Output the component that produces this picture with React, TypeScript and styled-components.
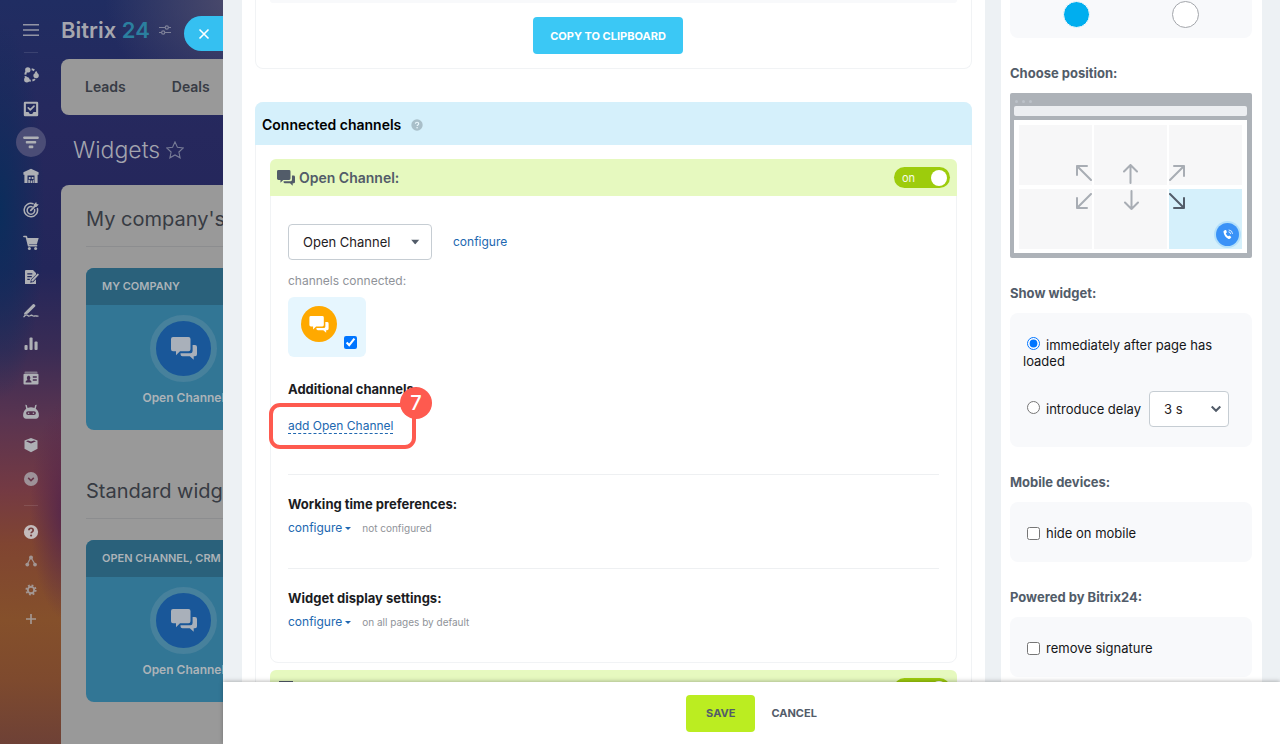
import React from "react";
import styled, { createGlobalStyle, css } from "styled-components";

const GlobalStyle = createGlobalStyle`
  *, *::before, *::after { box-sizing: border-box; }
  body { margin: 0; font-family: Inter, "Liberation Sans", sans-serif; font-size: 13px; line-height: 16px; color: #1b1c1f; }
  button, input, select { font: inherit; color: inherit; }
  h1, h2, h3, p, ul { margin: 0; padding: 0; }
  ul { list-style: none; }
  a { text-decoration: none; }
`;

/* ---------- shell ---------- */

const Shell = styled.div`
  display: grid;
  grid-template-columns: 223px minmax(0, 1fr);
  height: 100vh;
  overflow: hidden;
`;

const Backdrop = styled.div`
  position: relative;
  display: flex;
  min-height: 0;
  overflow: hidden;
  background:
    radial-gradient(ellipse 130px 110px at 235px 0, #4c4b6c 0%, #4c4b6c00 100%),
    radial-gradient(ellipse 45px 190px at 0 210px, #0b2d5c 0%, #0b2d5c00 100%),
    radial-gradient(ellipse 36px 110px at 66px 510px, #55264b 0%, #55264b00 100%),
    linear-gradient(180deg, #202d62 0, #26285d 130px, #23265a 270px, #3a2c55 350px, #5a3450 420px, #743a43 490px, #804531 545px, #85502b 620px, #7e4a2e 680px, #6e4136 744px);
`;

const Rail = styled.nav`
  display: flex;
  flex: none;
  flex-direction: column;
  align-items: center;
  width: 61px;
  padding-top: 22px;
  color: #aeb0b5;
`;

const IconButton = styled.button<{ $dim?: boolean; $active?: boolean }>`
  display: grid;
  place-items: center;
  width: 16px;
  height: 16px;
  padding: 0;
  border: 0;
  background: none;
  opacity: ${(p) => (p.$dim ? 0.75 : 1)};
  ${(p) =>
    p.$active &&
    css`
      width: 30px;
      height: 30px;
      margin: -7px 0;
      border-radius: 50%;
      background: #4b4d76;
    `}
`;

const RailDivider = styled.hr<{ $wide?: boolean }>`
  width: 14px;
  margin: ${(p) => (p.$wide ? 18 : 14)}px 0;
  border: 0;
  border-top: 1px solid #ffffff1c;
`;

const RailList = styled.ul<{ $tall?: boolean }>`
  display: flex;
  flex-direction: column;
  align-items: center;
  gap: 13px;
  ${(p) =>
    p.$tall &&
    css`
      height: 420px;
      justify-content: space-between;
      gap: 0;
    `}
`;

const RailItem = styled.li`
  display: flex;
`;

const Portal = styled.div`
  display: flex;
  flex: none;
  flex-direction: column;
  width: 400px;
`;

const PortalHead = styled.header`
  display: flex;
  flex: none;
  align-items: center;
  gap: 9px;
  height: 59px;
  color: #a5a6ae;
`;

const Brand = styled.span`
  font-size: 22px;
  font-weight: 600;
  line-height: 28px;
`;

const BrandNumber = styled.span`
  color: #2b7f9f;
`;

const PortalTabs = styled.nav`
  display: flex;
  flex: none;
  align-items: center;
  gap: 46px;
  height: 56px;
  padding: 0 24px;
  border-radius: 8px;
  background: #999;
`;

const PortalTab = styled.a`
  color: #383c45;
  font-size: 14px;
  font-weight: 600;
`;

const PortalTitle = styled.h1`
  display: flex;
  flex: none;
  align-items: center;
  gap: 6px;
  height: 70px;
  padding-left: 12px;
  color: #a3a4ae;
  font-size: 23px;
  font-weight: 300;
`;

const PortalBody = styled.section`
  display: flex;
  flex: 1;
  flex-direction: column;
  padding: 20px 25px;
  border-radius: 8px 0 0;
  background: #999;
`;

const WidgetGroup = styled.section`
  flex: none;
  height: 272px;
`;

const WidgetGroupTitle = styled.h2`
  padding-bottom: 13px;
  border-bottom: 1px solid #8c8d8f;
  color: #373b43;
  font-size: 20px;
  font-weight: 400;
  line-height: 28px;
  white-space: nowrap;
`;

const WidgetTile = styled.article`
  width: 195px;
  height: 162px;
  margin-top: 21px;
  overflow: hidden;
  border-radius: 8px;
  background: #327695;
  color: #acb3b8;
  font-size: 12px;
  font-weight: 600;
  text-align: center;
`;

const WidgetTileHead = styled.h3`
  padding: 0 16px;
  background: #2a617b;
  font-size: 11px;
  font-weight: 600;
  line-height: 37px;
  text-align: left;
  white-space: nowrap;
`;

const WidgetCircle = styled.div`
  display: grid;
  place-items: center;
  width: 67px;
  height: 67px;
  margin: 10px auto 8px;
  border: 6px solid #47819c;
  border-radius: 50%;
  background: #195799;
`;

const CloseTab = styled.button`
  position: absolute;
  top: 16px;
  right: 0;
  display: grid;
  place-items: center;
  width: 39px;
  height: 35px;
  padding: 0;
  border: 0;
  border-radius: 18px 0 0 18px;
  background: #35c0f1;
  color: #fff;
`;

/* ---------- slider panel ---------- */

const Panel = styled.div`
  display: flex;
  flex-direction: column;
  min-height: 0;
  background: #edf1f4;
`;

const PanelScroll = styled.div`
  display: grid;
  flex: 1;
  grid-template-columns: minmax(0, 1fr) 261px;
  gap: 16px;
  min-height: 0;
  padding: 0 18px 0 19px;
  overflow: hidden;
`;

const MainColumn = styled.main`
  padding: 0 13px;
  background: #fff;
`;

const Card = styled.section`
  border: 1px solid #f1f3f5;
  border-radius: 8px;
`;

const CodeCard = styled(Card)`
  margin-bottom: 33px;
  padding: 0 14px 14px;
  border-top: 0;
  border-radius: 0 0 8px 8px;
`;

const CodeArea = styled.div`
  height: 3px;
  border-radius: 0 0 4px 4px;
  background: #f8f9fb;
`;

const ActionRow = styled.div`
  display: flex;
  justify-content: center;
  padding: 14px 11px 0 0;
`;

const Button = styled.button<{ $kind: "primary" | "save" | "plain" }>`
  height: 37px;
  padding: 0 ${(p) => (p.$kind === "primary" ? 17 : p.$kind === "save" ? 20 : 0)}px;
  border: 0;
  border-radius: 4px;
  background: ${(p) => ({ primary: "#3bc8f5", save: "#bbed21", plain: "none" })[p.$kind]};
  color: ${(p) => (p.$kind === "primary" ? "#fff" : "#535c69")};
  font-size: 11px;
  font-weight: 700;
`;

const ChannelsHead = styled.h2`
  display: flex;
  align-items: center;
  gap: 10px;
  height: 43px;
  margin: -1px -1px 0;
  padding: 2px 7px 0;
  border-radius: 8px 8px 0 0;
  background: #d5f0fb;
  color: #000;
  font-size: 14px;
  font-weight: 600;
`;

const ChannelsBody = styled.div`
  display: flex;
  flex-direction: column;
  gap: 7px;
  padding: 14px;
`;

const ChannelHead = styled.header`
  display: flex;
  align-items: center;
  justify-content: space-between;
  height: 37px;
  margin: -1px -1px 0;
  padding: 0 7px;
  border-radius: 6px 6px 0 0;
  background: #e6f9bf;
`;

const ChannelTitle = styled.h3`
  display: flex;
  align-items: center;
  gap: 4px;
  color: #525c69;
  font-size: 14px;
  font-weight: 600;
`;

const Toggle = styled.label`
  display: flex;
  align-items: center;
  justify-content: space-between;
  width: 56px;
  height: 21px;
  padding: 0 3px 0 8px;
  border-radius: 11px;
  background: #9dcc0c;
  color: #f7fbe8;
  font-size: 11px;
`;

const ToggleKnob = styled.input`
  width: 16px;
  height: 16px;
  margin: 0;
  border-radius: 50%;
  background: #fff;
  appearance: none;
`;

const ChannelSection = styled.div<{ $first?: boolean }>`
  margin: 0 17px;
  padding: ${(p) => (p.$first ? "28px 0 40px" : "21px 0 32px")};
  border-top: ${(p) => (p.$first ? "0" : "1px solid #eef0f2")};
`;

const SelectRow = styled.div`
  display: flex;
  align-items: center;
  gap: 21px;
`;

const SelectBox = styled.span<{ $width: number }>`
  position: relative;
  display: inline-flex;
  width: ${(p) => p.$width}px;
  color: #525c69;

  svg {
    position: absolute;
    top: 50%;
    right: 8px;
    transform: translateY(-50%);
    pointer-events: none;
  }
`;

const Select = styled.select`
  width: 100%;
  height: 36px;
  padding: 0 14px;
  border: 1px solid #c6cdd3;
  border-radius: 4px;
  background: #fff;
  color: #1f2023;
  appearance: none;
`;

const Link = styled.a<{ $dashed?: boolean }>`
  color: #2067b0;
  font-size: 12px;
  border-bottom: ${(p) => (p.$dashed ? "1px dashed #2067b0" : "0")};
`;

const Muted = styled.p`
  margin: 13px 0 8px;
  color: #8f9399;
  font-size: 12px;
`;

const ConnectedTile = styled.label`
  display: flex;
  align-items: flex-end;
  gap: 7px;
  width: 78px;
  height: 60px;
  padding: 0 9px 8px 13px;
  border-radius: 6px;
  background: #e6f6fe;
`;

const OrangeCircle = styled.span`
  display: grid;
  align-self: flex-start;
  flex: none;
  place-items: center;
  width: 36px;
  height: 36px;
  margin-top: 9px;
  border-radius: 50%;
  background: #ffa900;
`;

const Check = styled.input`
  flex: none;
  width: 13px;
  height: 13px;
  margin: 0;
`;

const SubTitle = styled.h3`
  font-size: 13px;
  font-weight: 700;
`;

const AdditionalTitle = styled(SubTitle)`
  margin: 24px 0 21px;
`;

const Highlighted = styled.div`
  position: relative;
  display: flex;
  width: 104px;
  height: 16px;
  white-space: nowrap;
`;

const HighlightFrame = styled.span`
  position: absolute;
  top: -15px;
  left: -19px;
  width: 147px;
  height: 46px;
  border: 4px solid #fe5a4f;
  border-radius: 11px;
  pointer-events: none;
`;

const HighlightBadge = styled.span`
  position: absolute;
  top: -31px;
  left: 112px;
  width: 32px;
  height: 32px;
  border-radius: 50%;
  background: #fe5a4f;
  color: #fff;
  font-size: 20px;
  font-weight: 500;
  line-height: 32px;
  text-align: center;
`;

const SettingRow = styled.div`
  display: flex;
  align-items: center;
  gap: 11px;
  margin-top: 8px;
`;

const MenuButton = styled.button`
  display: flex;
  align-items: center;
  gap: 3px;
  padding: 0;
  border: 0;
  background: none;
  color: #2067b0;
  font-size: 12px;
`;

const Note = styled.span`
  color: #8f9399;
  font-size: 10px;
`;

/* ---------- right column ---------- */

const Aside = styled.aside`
  display: flex;
  flex-direction: column;
  padding: 0 10px 0 9px;
  background: #fff;
`;

const AsideBox = styled.div<{ $pad: string; $cut?: boolean }>`
  flex: none;
  padding: ${(p) => p.$pad};
  border-radius: ${(p) => (p.$cut ? "0 0 8px 8px" : "8px")};
  background: #f8f9fb;
  color: #151618;
`;

const ColorRow = styled.div`
  display: flex;
  justify-content: center;
  gap: 82px;
`;

const ColorRadio = styled.input<{ $fill: string; $line: string }>`
  width: 27px;
  height: 27px;
  margin: 0;
  border: 1px solid ${(p) => p.$line};
  border-radius: 50%;
  background: ${(p) => p.$fill};
  appearance: none;
`;

const AsideTitle = styled.h2`
  margin: 27px 0 12px;
  color: #525c69;
  font-size: 13px;
  font-weight: 700;
`;

const RadioText = styled.label`
  display: block;
`;

const Radio = styled.input`
  width: 13px;
  height: 13px;
  margin: 0 6px 0 4px;
`;

const DelayRow = styled.div`
  display: flex;
  align-items: center;
  gap: 8px;
  margin-top: 22px;
  white-space: nowrap;
`;

const CheckRow = styled.label`
  display: flex;
  align-items: center;
  gap: 6px;
  line-height: 20px;
`;

const Browser = styled.div`
  display: flex;
  flex-direction: column;
  gap: 4px;
  padding: 7px 5px 5px 4px;
  border-radius: 2px;
  background: #adb2b8;
`;

const BrowserDots = styled.div`
  display: flex;
  gap: 4px;
  height: 2px;
  padding-left: 1px;

  &::before, &::after, i { content: ""; width: 3px; height: 3px; border-radius: 50%; background: #bcc2c9; }
`;

const BrowserBar = styled.div`
  height: 10px;
  border-radius: 2px;
  background: #eceef1;
`;

const PositionGrid = styled.div`
  display: grid;
  grid-template-columns: repeat(3, 1fr);
  gap: 4px 2px;
  padding: 5px 5px 4px;
  background: #fff;
`;

const PositionCell = styled.button<{ $at: string; $selected?: boolean; $inset: number }>`
  position: relative;
  display: grid;
  place-items: ${(p) => p.$at};
  height: 60px;
  padding: ${(p) => p.$inset}px 0;
  border: 0;
  background: ${(p) => (p.$selected ? "#d5f0fb" : "#f7f7f8")};
  color: ${(p) => (p.$selected ? "#525c69" : "#a8adb4")};
`;

const WidgetPin = styled.span`
  position: absolute;
  right: 3px;
  bottom: 3px;
  display: grid;
  place-items: center;
  width: 23px;
  height: 23px;
  border-radius: 50%;
  background: #3a92f7;
  box-shadow: 0 0 0 2px #b4e0fa;
`;

const Footer = styled.footer`
  position: relative;
  display: flex;
  flex: none;
  align-items: center;
  justify-content: center;
  gap: 16px;
  height: 62px;
  background: #fff;
  box-shadow: 0 -1px 4px #00000042;
`;

/* ---------- icons ---------- */

type IconProps = { children: React.ReactNode; size?: number; box?: string };

const Icon = ({ children, size = 16, box = "0 0 16 16" }: IconProps) => (
  <svg width={size} height={size} viewBox={box} fill="currentColor" aria-hidden="true">
    {children}
  </svg>
);

const Bubbles = ({ width, height, color }: { width: number; height: number; color: string }) => (
  <svg width={width} height={height} viewBox="0 0 26 23" fill={color} aria-hidden="true">
    <path d="M2 0h15.500a2 2 0 0 1 2 2v10.300a2 2 0 0 1-2 2H9l-4 4v-4H2a2 2 0 0 1-2-2V2a2 2 0 0 1 2-2z" />
    <path d="M21.600 8H24a2 2 0 0 1 2 2v7.200a2 2 0 0 1-2 2h-1.300v3.600l-3.900-3.600h-7.300a2 2 0 0 1-2-2v-.9h9.900a2.200 2.200 0 0 0 2.200-2.200z" />
  </svg>
);

const stroke = (width: number) => ({
  fill: "none",
  stroke: "currentColor",
  strokeWidth: width,
  strokeLinecap: "round" as const,
  strokeLinejoin: "round" as const,
});

const railIcons: { name: string; art: React.ReactNode; active?: boolean; dim?: boolean }[] = [
  {
    name: "Feed",
    art: (
      <>
        <circle cx="8" cy="8" r="5.700" fill="none" stroke="currentColor" strokeWidth="2" strokeDasharray="2.800 1.677" />
        <circle cx="4.800" cy="2.900" r="2.700" />
        <circle cx="13.100" cy="8.600" r="2.700" />
        <circle cx="3.800" cy="12.800" r="2.700" />
      </>
    ),
  },
  {
    name: "Tasks",
    art: (
      <>
        <path fillRule="evenodd" d="M2 .8h12A1.200 1.200 0 0 1 15.200 2v12a1.200 1.200 0 0 1-1.200 1.200H2A1.200 1.200 0 0 1 .8 14V2A1.200 1.200 0 0 1 2 .8zm.9 2v8.200h2.600l1.300 2h2.400l1.300-2h2.600V2.800z" />
        <path d="M5.300 6.900l2 2 3.700-3.800" {...stroke(1.7)} />
      </>
    ),
  },
  {
    name: "CRM",
    active: true,
    art: (
      <>
        <rect x=".3" y="2.400" width="15.400" height="2.600" rx=".8" />
        <rect x="2.800" y="7" width="10.400" height="2.600" rx=".8" />
        <rect x="5.700" y="11.600" width="4.600" height="2.600" rx=".8" />
      </>
    ),
  },
  {
    name: "Inventory",
    art: (
      <path
        fillRule="evenodd"
        d="M8 .7l7.600 3.600v2.500h-1V15H11.500V7.600h-7V15H1.400V6.800h-1V4.300zM5.800 9h1.800v2H5.800zM8.700 9h1.800v2H8.700zM5.300 11.800h1.600V15H5.300zM7.600 12.600h1.700V15H7.600zM9.900 11.800h.9V15h-.9z"
      />
    ),
  },
  {
    name: "Marketing",
    art: (
      <>
        <path d="M10 1.700A6.700 6.700 0 1 0 14.400 6.500" {...stroke(1.5)} />
        <path d="M9 4.700a3.800 3.800 0 1 0 2.600 2.700" {...stroke(1.5)} />
        <path d="M7.800 8.400l4.400-4.600" {...stroke(1.8)} />
        <path d="M10.800 4.900V2.400L13.200.1l.5 2 2.100.5-2.400 2.400z" />
      </>
    ),
  },
  {
    name: "Sales",
    art: (
      <>
        <path d="M.9 1.500h2.400l2.300 9.300h8" {...stroke(1.6)} />
        <path d="M3.800 3h11.900l-1.900 6.600H5.300z" />
        <circle cx="6.400" cy="13.600" r="1.500" />
        <circle cx="12.600" cy="13.600" r="1.500" />
      </>
    ),
  },
  {
    name: "Documents",
    art: (
      <>
        <path
          fillRule="evenodd"
          d="M3 .9h7l3 3v1.500L8 10.600l-.8 3.200 3.200-.8 2.600-2.700V15H2V1.900a1 1 0 0 1 1-1zm1.300 3.300v1.300h5V4.200zm0 2.800v1.300h4.500V7zm0 2.800V11h2.500V9.800z"
        />
        <path d="M9.300 11.500l5.500-5.900" {...stroke(1.9)} />
      </>
    ),
  },
  {
    name: "Signature",
    art: (
      <>
        <path d="M1.200 9.900L9.900 1.200q.7-.6 1.400 0l.8.900q.7.700 0 1.400L5 10.500l-3.900 1.300z" />
        <path d="M1 13.700c2.200-3 3-1.700 4.300-.8 1.300.9 2-.9 3.300-.6 1.300.3 1.300 1.200 2.900.7 1-.4 2 .2 3.500.1" {...stroke(1.4)} />
      </>
    ),
  },
  {
    name: "Analytics",
    art: (
      <>
        <rect x="1.500" y="9" width="3.100" height="5" rx="1" />
        <rect x="6.500" y="1.500" width="3.100" height="12.500" rx="1" />
        <rect x="11.500" y="5.500" width="3.100" height="8.500" rx="1" />
      </>
    ),
  },
  {
    name: "Contacts",
    art: (
      <>
        <rect x="1.500" y="1.600" width="13" height="2" rx=".8" opacity=".55" />
        <path
          fillRule="evenodd"
          d="M1.500 3.800h13a1 1 0 0 1 1 1v8.700a1 1 0 0 1-1 1h-13a1 1 0 0 1-1-1V4.800a1 1 0 0 1 1-1zM2.600 12.500h5.900c0-1.800-1-2-2-2.400 1.400-1.600.8-4.300-.9-4.300s-2.300 2.700-.9 4.300c-1 .4-2.100.6-2.100 2.400zM9.800 6.300v1.400h4V6.300zm0 3v1.400h4V9.300z"
        />
      </>
    ),
  },
  {
    name: "Robots",
    art: (
      <path
        fillRule="evenodd"
        d="M2.300.8l1.400.2.900 3A8.500 8.500 0 0 1 8 3.200c1.200 0 2.300.3 3.400.8l.9-3 1.400-.2-.9 3.900c2 1.400 3.100 3.700 3.100 6.600 0 2-1.200 3.400-3 3.400H3.100c-1.800 0-3-1.400-3-3.400 0-2.900 1.200-5.200 3.100-6.600zM5 7.200a1.900 1.900 0 0 0 0 3.800h6a1.900 1.900 0 0 0 0-3.800zm.6 1.200a.8.800 0 1 1 0 1.600.8.800 0 0 1 0-1.600zm4.800 0a.8.800 0 1 1 0 1.600.8.800 0 0 1 0-1.600z"
      />
    ),
  },
  {
    name: "Market",
    art: (
      <>
        <path d="M8 1l6.500 2.600v8.200L8 15.200l-6.500-3.400V3.600z" />
        <path d="M3 4.300L8 6.500l5-2.200L11 3.400 8 4.600 5 3.400z" fill="#562f4d" />
      </>
    ),
  },
  {
    name: "More",
    dim: true,
    art: (
      <>
        <circle cx="8" cy="8" r="7" />
        <path d="M5.200 6.900L8 9.600l2.800-2.700" fill="none" stroke="#65344a" strokeWidth="1.500" />
      </>
    ),
  },
];

const toolIcons: { name: string; art: React.ReactNode; dim?: boolean }[] = [
  {
    name: "Help",
    art: (
      <>
        <circle cx="8" cy="8" r="7.100" fill="#c4bcbc" />
        <path d="M5.900 6.300c.1-2.800 4.300-2.600 4.300 0 0 1.500-2 1.500-2.100 3" fill="none" stroke="#763e3d" strokeWidth="1.700" />
        <circle cx="8.100" cy="11.500" r="1.100" fill="#763e3d" />
      </>
    ),
  },
  {
    name: "Sitemap",
    dim: true,
    art: (
      <>
        <path d="M4.500 10.800L7 6M8.900 6l2.800 4.800" {...stroke(1.2)} />
        <circle cx="8" cy="4.600" r="2" />
        <circle cx="4.300" cy="11.600" r="1.900" />
        <circle cx="12" cy="11.600" r="1.900" />
      </>
    ),
  },
  {
    name: "Settings",
    dim: true,
    art: (
      <>
        <circle cx="8" cy="8" r="3.200" fill="none" stroke="currentColor" strokeWidth="1.900" />
        <circle cx="8" cy="8" r="4.700" fill="none" stroke="currentColor" strokeWidth="1.800" strokeDasharray="1.850 1.841" />
      </>
    ),
  },
  { name: "Add", dim: true, art: <path d="M8 3v10M3 8h10" fill="none" stroke="currentColor" strokeWidth="1.700" /> },
];

const Caret = () => (
  <svg width="6" height="3" viewBox="0 0 6 3" fill="currentColor" aria-hidden="true">
    <path d="M0 0h6L3 3z" />
  </svg>
);

const positions = [
  { name: "Top left", at: "end end", d: "M15 15L1 1M1 10V1h10" },
  { name: "Top center", at: "end center", d: "M7.500 19V1M1 7.500L7.500 1 14 7.500", tall: true },
  { name: "Top right", at: "end start", d: "M1 15L15 1M5 1h10v10" },
  { name: "Bottom left", at: "start end", d: "M15 1L1 15M1 5v10h10" },
  { name: "Bottom center", at: "start center", d: "M8.500 1v18M2 12.500L8.500 19l6.500-6.500", tall: true },
  { name: "Bottom right", at: "start start", d: "M1 1l14 14M15 5v10H5", selected: true },
];

/* ---------- parts ---------- */

const CompanyWidgets = ({ title, label }: { title: string; label: string }) => (
  <WidgetGroup>
    <WidgetGroupTitle>{title}</WidgetGroupTitle>
    <WidgetTile>
      <WidgetTileHead>{label}</WidgetTileHead>
      <WidgetCircle>
        <Bubbles width={26} height={23} color="#a9b0ba" />
      </WidgetCircle>
      Open Channel
    </WidgetTile>
  </WidgetGroup>
);

const Setting = ({ title, note }: { title: string; note: string }) => (
  <ChannelSection>
    <SubTitle>{title}</SubTitle>
    <SettingRow>
      <MenuButton type="button">
        configure
        <Caret />
      </MenuButton>
      <Note>{note}</Note>
    </SettingRow>
  </ChannelSection>
);

const Switch = ({ name }: { name: string }) => (
  <Toggle>
    on
    <ToggleKnob type="checkbox" role="switch" aria-label={name} defaultChecked />
  </Toggle>
);

export default function App() {
  return (
    <>
      <GlobalStyle />
      <Shell>
        <Backdrop>
          <Rail aria-label="Sections">
            <IconButton type="button" aria-label="Menu">
              <Icon>
                <path d="M0 2.700h16M0 8h16M0 13.300h16" fill="none" stroke="#9395a5" strokeWidth="1.500" />
              </Icon>
            </IconButton>
            <RailDivider />
            <RailList $tall>
              {railIcons.map((item) => (
                <RailItem key={item.name}>
                  <IconButton type="button" aria-label={item.name} $active={item.active} $dim={item.dim}>
                    <Icon>{item.art}</Icon>
                  </IconButton>
                </RailItem>
              ))}
            </RailList>
            <RailDivider $wide />
            <RailList>
              {toolIcons.map((item) => (
                <RailItem key={item.name}>
                  <IconButton type="button" aria-label={item.name} $dim={item.dim}>
                    <Icon>{item.art}</Icon>
                  </IconButton>
                </RailItem>
              ))}
            </RailList>
          </Rail>

          <Portal>
            <PortalHead>
              <Brand>
                Bitrix <BrandNumber>24</BrandNumber>
              </Brand>
              <svg width="12" height="12" viewBox="0 0 12 12" fill="none" stroke="#7e8199" strokeWidth="1.200" aria-hidden="true">
                <path d="M0 3.500h6M9.500 3.500H12M0 8.500h2.500M6 8.500h6" />
                <circle cx="7.800" cy="3.500" r="1.600" />
                <circle cx="4.200" cy="8.500" r="1.600" />
              </svg>
            </PortalHead>
            <PortalTabs>
              <PortalTab href="#leads">Leads</PortalTab>
              <PortalTab href="#deals">Deals</PortalTab>
            </PortalTabs>
            <PortalTitle>
              Widgets
              <svg width="18" height="18" viewBox="0 0 18 18" fill="none" stroke="#777b96" strokeWidth="1.100" aria-hidden="true">
                <path d="M9 .9l2.400 5.400 5.900.7-4.400 4 1.200 5.800L9 13.900l-5.100 2.900 1.200-5.800-4.400-4 5.900-.7z" />
              </svg>
            </PortalTitle>
            <PortalBody>
              <CompanyWidgets title="My company's widgets" label="MY COMPANY" />
              <CompanyWidgets title="Standard widgets" label="OPEN CHANNEL, CRM FORM" />
            </PortalBody>
          </Portal>

          <CloseTab type="button" aria-label="Close">
            <svg width="12" height="12" viewBox="0 0 12 12" fill="none" stroke="currentColor" strokeWidth="1.600" aria-hidden="true">
              <path d="M1.500 1.500l9 9M10.500 1.500l-9 9" />
            </svg>
          </CloseTab>
        </Backdrop>

        <Panel>
          <PanelScroll>
            <MainColumn>
              <CodeCard>
                <CodeArea />
                <ActionRow>
                  <Button type="button" $kind="primary">
                    COPY TO CLIPBOARD
                  </Button>
                </ActionRow>
              </CodeCard>

              <Card>
                <ChannelsHead>
                  Connected channels
                  <Icon size={12} box="0 0 12 12">
                    <circle cx="6" cy="6" r="5.700" fill="#a9bfc9" />
                    <path d="M4.400 4.800c.1-2.100 3.300-2 3.300 0 0 1.100-1.500 1.100-1.600 2.200" fill="none" stroke="#eaf7fc" strokeWidth="1.200" />
                    <circle cx="6.100" cy="8.700" r=".8" fill="#eaf7fc" />
                  </Icon>
                </ChannelsHead>
                <ChannelsBody>
                  <Card>
                    <ChannelHead>
                      <ChannelTitle>
                        <Bubbles width={18} height={16} color="#525c69" />
                        Open Channel:
                      </ChannelTitle>
                      <Switch name="Open Channel" />
                    </ChannelHead>
                    <ChannelSection $first>
                      <SelectRow>
                        <SelectBox $width={144}>
                          <Select aria-label="Open Channel" defaultValue="main">
                            <option value="main">Open Channel</option>
                          </Select>
                          <svg width="16" height="5" viewBox="0 0 16 5" fill="currentColor" aria-hidden="true">
                            <path d="M3 0h8.400L7.200 5z" />
                          </svg>
                        </SelectBox>
                        <Link href="#configure">configure</Link>
                      </SelectRow>
                      <Muted>channels connected:</Muted>
                      <ConnectedTile>
                        <OrangeCircle>
                          <Bubbles width={20} height={17} color="#fff" />
                        </OrangeCircle>
                        <Check type="checkbox" aria-label="Live chat" defaultChecked />
                      </ConnectedTile>
                      <AdditionalTitle>Additional channels:</AdditionalTitle>
                      <Highlighted>
                        <Link href="#add" $dashed>
                          add Open Channel
                        </Link>
                        <HighlightFrame />
                        <HighlightBadge>7</HighlightBadge>
                      </Highlighted>
                    </ChannelSection>
                    <Setting title="Working time preferences:" note="not configured" />
                    <Setting title="Widget display settings:" note="on all pages by default" />
                  </Card>
                  <Card>
                    <ChannelHead>
                      <ChannelTitle>
                        <svg width="18" height="16" viewBox="0 0 18 16" fill="#525c69" aria-hidden="true">
                          <path fillRule="evenodd" d="M2 0h14v15H2zm2 3v10h10V3z" />
                        </svg>
                        CRM form:
                      </ChannelTitle>
                      <Switch name="CRM form" />
                    </ChannelHead>
                  </Card>
                </ChannelsBody>
              </Card>
            </MainColumn>

            <Aside>
              <AsideBox $pad="1px 0 10px" $cut>
                <ColorRow>
                  <ColorRadio type="radio" name="color" aria-label="Blue" $fill="#00aeef" $line="#f8f9fb" defaultChecked />
                  <ColorRadio type="radio" name="color" aria-label="White" $fill="#fff" $line="#a3a6ab" />
                </ColorRow>
              </AsideBox>

              <AsideTitle>Choose position:</AsideTitle>
              <Browser>
                <BrowserDots>
                  <i />
                </BrowserDots>
                <BrowserBar />
                <PositionGrid>
                  {positions.map((p) => (
                    <PositionCell
                      key={p.name}
                      type="button"
                      aria-label={p.name}
                      $at={p.at}
                      $inset={p.tall ? 1 : 4}
                      $selected={p.selected}
                    >
                      <svg width="16" height={p.tall ? 20 : 16} viewBox={p.tall ? "0 0 16 20" : "0 0 16 16"} aria-hidden="true">
                        <path d={p.d} {...stroke(2)} />
                      </svg>
                      {p.selected && (
                        <WidgetPin>
                          <svg width="12" height="12" viewBox="0 0 12 12" fill="#fff" aria-hidden="true">
                            <path d="M2.300 1.600l1.200-.5c.4-.1.700.1.800.4l.5 1.400c.1.300 0 .6-.3.800l-.7.500c.5 1.300 1.200 2.300 2.400 3.100l.7-.5c.3-.2.600-.2.900 0l1.200.9c.3.200.3.600.1.900l-.8 1c-.4.500-1.100.600-1.700.3C3.700 8.700 2 6.400 1.500 3c-.1-.6.200-1.100.8-1.400z" />
                            <path d="M6.500 2.800q2 .2 2.200 2.300M6.700.9q3.600.3 3.900 4" fill="none" stroke="#fff" strokeWidth=".8" />
                          </svg>
                        </WidgetPin>
                      )}
                    </PositionCell>
                  ))}
                </PositionGrid>
              </Browser>

              <AsideTitle>Show widget:</AsideTitle>
              <AsideBox $pad="24px 13px 20px">
                <RadioText>
                  <Radio type="radio" name="delay" defaultChecked />
                  immediately after page has loaded
                </RadioText>
                <DelayRow>
                  <RadioText>
                    <Radio type="radio" name="delay" />
                    introduce delay
                  </RadioText>
                  <SelectBox $width={80}>
                    <Select aria-label="Delay" defaultValue="3">
                      <option value="3">3 s</option>
                    </Select>
                    <svg width="10" height="7" viewBox="0 0 10 7" fill="none" stroke="currentColor" strokeWidth="2" aria-hidden="true">
                      <path d="M.7 1L5 5.300 9.300 1" />
                    </svg>
                  </SelectBox>
                </DelayRow>
              </AsideBox>

              <AsideTitle>Mobile devices:</AsideTitle>
              <AsideBox $pad="21px 17px 19px">
                <CheckRow>
                  <Check type="checkbox" />
                  hide on mobile
                </CheckRow>
              </AsideBox>

              <AsideTitle>Powered by Bitrix24:</AsideTitle>
              <AsideBox $pad="21px 17px 19px">
                <CheckRow>
                  <Check type="checkbox" />
                  remove signature
                </CheckRow>
              </AsideBox>
            </Aside>
          </PanelScroll>

          <Footer>
            <Button type="button" $kind="save">
              SAVE
            </Button>
            <Button type="button" $kind="plain">
              CANCEL
            </Button>
          </Footer>
        </Panel>
      </Shell>
    </>
  );
}
